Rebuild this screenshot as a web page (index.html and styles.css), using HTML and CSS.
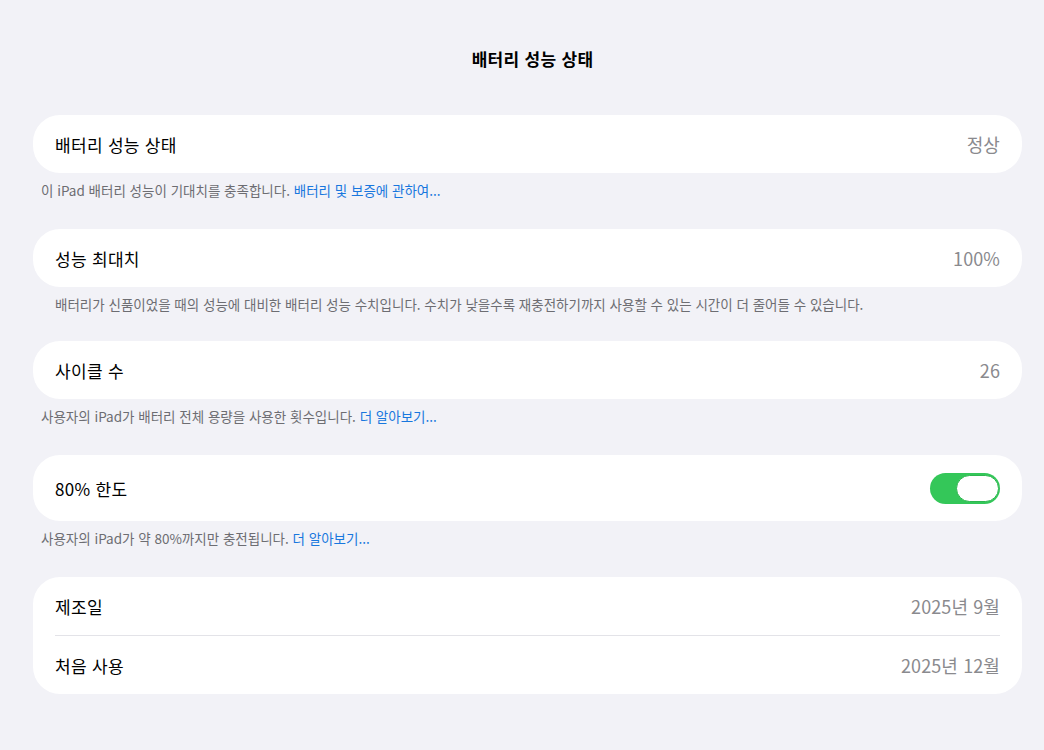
FILE: index.html
```html
<!DOCTYPE html>
<html lang="ko">
<head>
    <meta charset="UTF-8">
    <meta name="viewport" content="width=device-width, initial-scale=1.0">
    <title>배터리 성능 상태</title>
    <link rel="stylesheet" href="styles.css">
</head>
<body>
    <div class="page">
        <h1 class="page-title">배터리 성능 상태</h1>

        <!-- Health -->
        <div class="card">
            <div class="row">
                <span class="label">배터리 성능 상태</span>
                <span class="value">정상</span>
            </div>
        </div>
        <p class="note">이 iPad 배터리 성능이 기대치를 충족합니다. <a class="link" href="#">배터리 및 보증에 관하여...</a></p>

        <!-- Maximum capacity -->
        <div class="card">
            <div class="row">
                <span class="label">성능 최대치</span>
                <span class="value">100%</span>
            </div>
        </div>
        <p class="note note-indent">배터리가 신품이었을 때의 성능에 대비한 배터리 성능 수치입니다. 수치가 낮을수록 재충전하기까지 사용할 수 있는 시간이 더 줄어들 수 있습니다.</p>

        <!-- Cycle count -->
        <div class="card">
            <div class="row">
                <span class="label">사이클 수</span>
                <span class="value">26</span>
            </div>
        </div>
        <p class="note">사용자의 iPad가 배터리 전체 용량을 사용한 횟수입니다. <a class="link" href="#">더 알아보기...</a></p>

        <!-- 80% limit -->
        <div class="card">
            <div class="row row-tall">
                <span class="label">80% 한도</span>
                <span class="toggle"><span class="knob"></span></span>
            </div>
        </div>
        <p class="note">사용자의 iPad가 약 80%까지만 충전됩니다. <a class="link" href="#">더 알아보기...</a></p>

        <!-- Dates -->
        <div class="card">
            <div class="row">
                <span class="label">제조일</span>
                <span class="value">2025년 9월</span>
            </div>
            <div class="divider"></div>
            <div class="row">
                <span class="label">처음 사용</span>
                <span class="value">2025년 12월</span>
            </div>
        </div>
    </div>
</body>
</html>
```

FILE: styles.css
```css
body {
    margin: 0;
    background: #f2f2f7;
    font-family: 'Noto Sans CJK KR', 'Noto Sans', sans-serif;
    color: #000;
}
.page {
    padding: 0 22px 40px 33px;
}
.page-title {
    margin: 0 0 42px;
    padding: 45px 0 0 10px;
    text-align: center;
    font-size: 17px;
    line-height: 28px;
    font-weight: 700;
    letter-spacing: 0.3px;
}
.card {
    background: #fff;
    border-radius: 27px;
    overflow: hidden;
}
.row {
    display: flex;
    align-items: center;
    justify-content: space-between;
    height: 58px;
    padding: 0 22px;
}
.row-tall {
    height: 66px;
}
.label {
    font-size: 17px;
    letter-spacing: 0.3px;
}
.value {
    font-size: 18px;
    color: #8a8a8e;
    letter-spacing: 0.1px;
}
.divider {
    height: 1px;
    background: #e3e3e8;
    margin: 0 22px;
}
.note {
    margin: 8px 0 0;
    padding: 0 8px 30px;
    font-size: 13.5px;
    line-height: 18px;
    color: #6d6d72;
}
.note-indent {
    padding-left: 22px;
    padding-bottom: 28px;
}
.link {
    color: #1877de;
    text-decoration: none;
}
.toggle {
    display: flex;
    align-items: center;
    justify-content: flex-end;
    width: 70px;
    height: 31px;
    box-sizing: border-box;
    padding: 2px 1px;
    border-radius: 16px;
    background: #34c759;
}
.knob {
    width: 43px;
    height: 27px;
    box-sizing: border-box;
    border-radius: 14px;
    background: #fff;
    border: 1px solid #2db64f;
}
```
